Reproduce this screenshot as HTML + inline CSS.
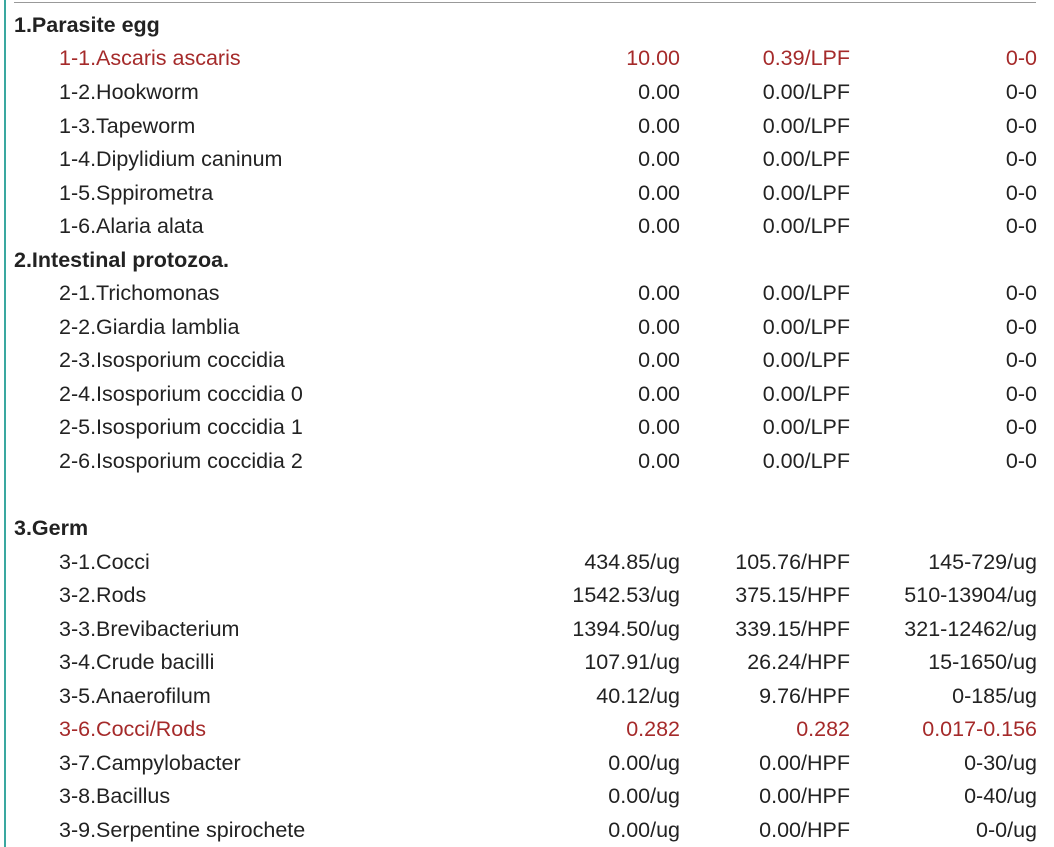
<!DOCTYPE html>
<html><head><meta charset="utf-8"><style>
body{margin:0;width:1054px;height:847px;background:#fff;position:relative;overflow:hidden;font-family:"Liberation Sans","Noto Sans CJK SC",sans-serif;font-size:21.5px;color:#222}
.vl{position:absolute;left:4px;top:0;width:2px;height:847px;background:#3aa8a0}
.hl{position:absolute;left:14px;top:2px;width:1022px;height:1px;background:#999}
.r{position:absolute;left:0;width:1054px;height:34px;line-height:34px}
.r span{position:absolute;white-space:nowrap}
.h{left:14px;font-weight:bold}
.n{left:59px}
.a{right:374px}.b{right:204px}.c{right:17px}
.red{color:#a52a2a}
</style></head><body>
<div class="vl"></div><div class="hl"></div>
<div class="r" style="top:8px"><span class="h">1.Parasite egg</span></div>
<div class="r red" style="top:41px"><span class="n">1-1.Ascaris ascaris</span><span class="a">10.00</span><span class="b">0.39/LPF</span><span class="c">0-0</span></div>
<div class="r" style="top:75px"><span class="n">1-2.Hookworm</span><span class="a">0.00</span><span class="b">0.00/LPF</span><span class="c">0-0</span></div>
<div class="r" style="top:109px"><span class="n">1-3.Tapeworm</span><span class="a">0.00</span><span class="b">0.00/LPF</span><span class="c">0-0</span></div>
<div class="r" style="top:142px"><span class="n">1-4.Dipylidium caninum</span><span class="a">0.00</span><span class="b">0.00/LPF</span><span class="c">0-0</span></div>
<div class="r" style="top:176px"><span class="n">1-5.Sppirometra</span><span class="a">0.00</span><span class="b">0.00/LPF</span><span class="c">0-0</span></div>
<div class="r" style="top:209px"><span class="n">1-6.Alaria alata</span><span class="a">0.00</span><span class="b">0.00/LPF</span><span class="c">0-0</span></div>
<div class="r" style="top:243px"><span class="h">2.Intestinal protozoa.</span></div>
<div class="r" style="top:276px"><span class="n">2-1.Trichomonas</span><span class="a">0.00</span><span class="b">0.00/LPF</span><span class="c">0-0</span></div>
<div class="r" style="top:310px"><span class="n">2-2.Giardia lamblia</span><span class="a">0.00</span><span class="b">0.00/LPF</span><span class="c">0-0</span></div>
<div class="r" style="top:343px"><span class="n">2-3.Isosporium coccidia</span><span class="a">0.00</span><span class="b">0.00/LPF</span><span class="c">0-0</span></div>
<div class="r" style="top:377px"><span class="n">2-4.Isosporium coccidia 0</span><span class="a">0.00</span><span class="b">0.00/LPF</span><span class="c">0-0</span></div>
<div class="r" style="top:410px"><span class="n">2-5.Isosporium coccidia 1</span><span class="a">0.00</span><span class="b">0.00/LPF</span><span class="c">0-0</span></div>
<div class="r" style="top:444px"><span class="n">2-6.Isosporium coccidia 2</span><span class="a">0.00</span><span class="b">0.00/LPF</span><span class="c">0-0</span></div>
<div class="r" style="top:511px"><span class="h">3.Germ</span></div>
<div class="r" style="top:545px"><span class="n">3-1.Cocci</span><span class="a">434.85/ug</span><span class="b">105.76/HPF</span><span class="c">145-729/ug</span></div>
<div class="r" style="top:578px"><span class="n">3-2.Rods</span><span class="a">1542.53/ug</span><span class="b">375.15/HPF</span><span class="c">510-13904/ug</span></div>
<div class="r" style="top:612px"><span class="n">3-3.Brevibacterium</span><span class="a">1394.50/ug</span><span class="b">339.15/HPF</span><span class="c">321-12462/ug</span></div>
<div class="r" style="top:645px"><span class="n">3-4.Crude bacilli</span><span class="a">107.91/ug</span><span class="b">26.24/HPF</span><span class="c">15-1650/ug</span></div>
<div class="r" style="top:679px"><span class="n">3-5.Anaerofilum</span><span class="a">40.12/ug</span><span class="b">9.76/HPF</span><span class="c">0-185/ug</span></div>
<div class="r red" style="top:712px"><span class="n">3-6.Cocci/Rods</span><span class="a">0.282</span><span class="b">0.282</span><span class="c">0.017-0.156</span></div>
<div class="r" style="top:746px"><span class="n">3-7.Campylobacter</span><span class="a">0.00/ug</span><span class="b">0.00/HPF</span><span class="c">0-30/ug</span></div>
<div class="r" style="top:779px"><span class="n">3-8.Bacillus</span><span class="a">0.00/ug</span><span class="b">0.00/HPF</span><span class="c">0-40/ug</span></div>
<div class="r" style="top:813px"><span class="n">3-9.Serpentine spirochete</span><span class="a">0.00/ug</span><span class="b">0.00/HPF</span><span class="c">0-0/ug</span></div>
</body></html>
